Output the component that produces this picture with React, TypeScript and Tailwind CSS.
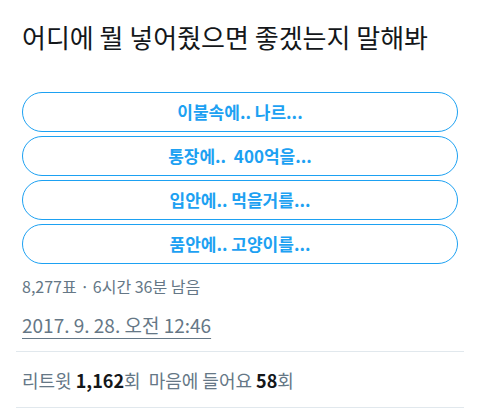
const options = ['이불속에.. 나르...', '통장에..  400억을...', '입안에.. 먹을거를...', '품안에.. 고양이를...'];

export default function App() {
  return (
    <div
      className="bg-white w-[480px] h-[409px] overflow-hidden px-4"
      style={{ fontFamily: '"Noto Sans CJK KR", "Noto Sans", sans-serif' }}
    >
      <div className="px-[6px] pt-[20px]">
        <h1 className="text-[26px] leading-[34px] text-[#14171a] font-normal whitespace-nowrap">
          어디에 뭘 넣어줬으면 좋겠는지 말해봐
        </h1>

        <div className="mt-[38px] flex flex-col gap-[4px]">
          {options.map((o) => (
            <button
              key={o}
              className="h-[40px] w-full rounded-full border-[1.5px] border-[#1da1f2] text-[#1da1f2] text-[17px] font-semibold flex items-center justify-center whitespace-pre"
            >
              {o}
            </button>
          ))}
        </div>

        <p className="mt-[12px] text-[16px] leading-[20px] text-[#657786]">8,277표 · 6시간 36분 남음</p>

        <p className="mt-[17px] text-[19px] leading-[24px] text-[#657786] underline underline-offset-[5px] decoration-1">
          2017. 9. 28. 오전 12:46
        </p>
      </div>

      <div className="mt-[14px] border-t border-[#e1e8ed]" />
      <div className="px-[6px] pt-[16px] pb-[15px]">
        <p className="text-[18px] leading-[24px] text-[#657786] whitespace-nowrap">
          리트윗 <span className="font-bold text-[#14171a]">1,162</span>회 <span className="ml-[4px]">마음에 들어요</span>{' '}
          <span className="font-bold text-[#14171a]">58</span>회
        </p>
      </div>
      <div className="border-t border-[#e1e8ed]" />
    </div>
  );
}
